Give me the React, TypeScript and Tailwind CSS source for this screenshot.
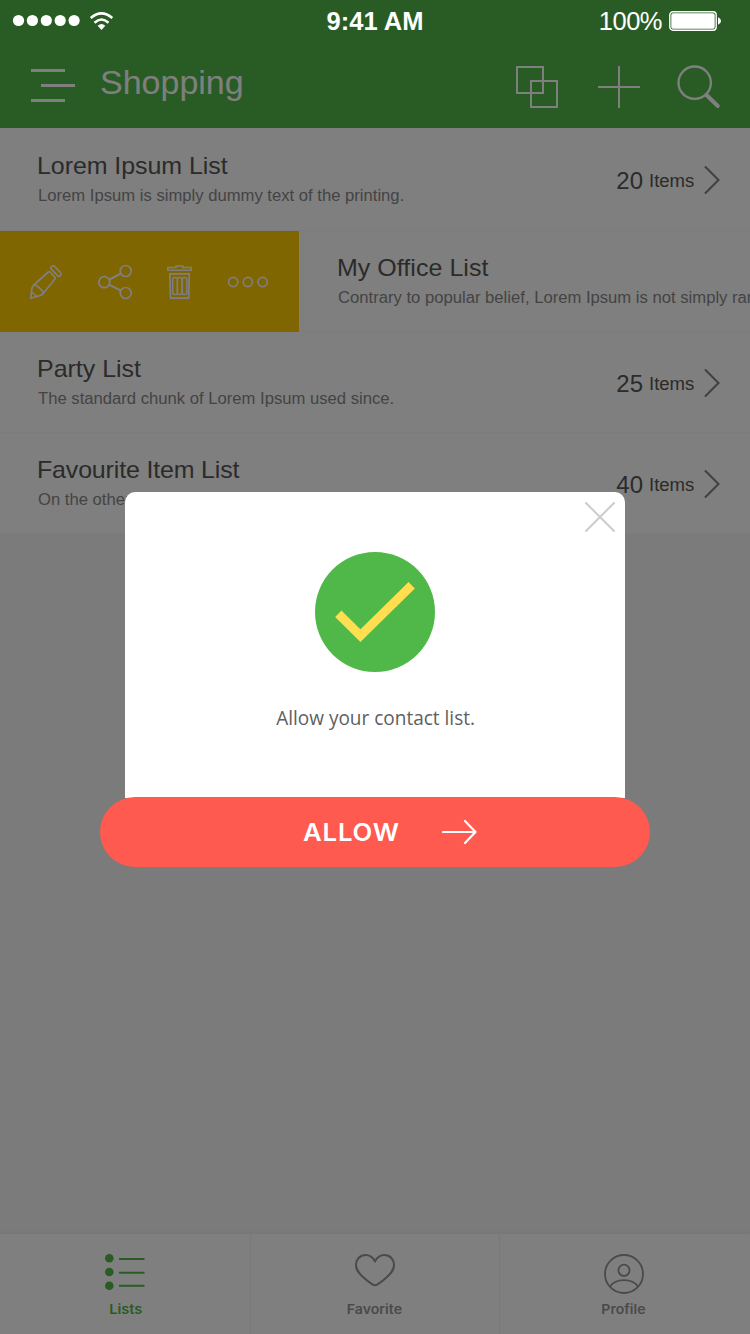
import React from "react";

type ListRow = { title: string; note: string; count: number; tracking: string };

const first: ListRow = {
  title: "Lorem Ipsum List",
  note: "Lorem Ipsum is simply dummy text of the printing.",
  count: 20,
  tracking: "tracking-[-0.05px]",
};
const rest: ListRow[] = [
  { title: "Party List", note: "The standard chunk of Lorem Ipsum used since.", count: 25, tracking: "tracking-normal" },
  { title: "Favourite Item List", note: "On the other hand, we denounce with.", count: 40, tracking: "tracking-[-0.15px]" },
];

function RowText({ title, note, tracking }: { title: string; note: string; tracking: string }) {
  return (
    <div className="origin-left scale-x-[1.04] whitespace-nowrap">
      <div className={"text-[24px] leading-[30px] text-[#565656] " + tracking}>{title}</div>
      <div className="mt-[5px] pl-px text-[16px] leading-5 text-[#888888]">{note}</div>
    </div>
  );
}

function Row({ row, className }: { row: ListRow; className: string }) {
  return (
    <div className={"flex items-start justify-between border-b border-[#f8f8f8] bg-white pl-[36.5px] pr-[30px] " + className}>
      <RowText title={row.title} note={row.note} tracking={row.tracking} />
      <div className="flex h-[59px] items-center text-[#565656]">
        <span className="text-[24px] leading-none">{row.count}</span>
        <span className="ml-[6px] origin-left scale-x-[1.03] text-[18px] leading-none">Items</span>
        <svg className="-mt-px ml-[11px] h-[30px] w-[16px]" viewBox="0 0 16 30" fill="none" stroke="#808080" strokeWidth="2">
          <path d="M1.500 2L14.500 15L1.500 28" strokeLinecap="round" />
        </svg>
      </div>
    </div>
  );
}

function StatusBar() {
  return (
    <div className="absolute inset-x-0 top-0 grid h-10 grid-cols-[1fr_auto_1fr] grid-rows-[40px] items-center text-white">
      <svg className="h-10 w-[120px]" viewBox="0 0 120 40">
        <g fill="#fff">
          <circle cx="18.500" cy="20.500" r="5.600" />
          <circle cx="32.400" cy="20.500" r="5.600" />
          <circle cx="46.300" cy="20.500" r="5.600" />
          <circle cx="60.200" cy="20.500" r="5.600" />
          <circle cx="74.100" cy="20.500" r="5.600" />
          <path d="M101.500 30L97.700 25.800Q101.500 22.200 105.300 25.800Z" />
        </g>
        <g fill="none" stroke="#fff" strokeWidth="2.600">
          <path d="M94.500 22.700Q101.500 16.300 108.500 22.700" />
          <path d="M90.700 18Q101.500 8.800 112.300 18" />
        </g>
      </svg>
      <span className="translate-y-px text-[25.5px] font-bold leading-10">9:41 AM</span>
      <div className="flex items-center justify-end pr-[28px]">
        <span className="translate-y-px text-[25.5px] leading-10 tracking-[-0.5px]">100%</span>
        <svg className="ml-[7px] mt-[2px] h-5 w-[53px]" viewBox="0 0 53 20">
          <rect x="0.800" y="0.800" width="46.400" height="18.400" rx="3.200" fill="none" stroke="#fff" strokeWidth="1.400" />
          <rect x="2.300" y="2.300" width="43.400" height="15.400" rx="1.800" fill="#fff" />
          <path d="M49 6.200Q52 7.500 52 10Q52 12.500 49 13.800Z" fill="#fff" />
        </svg>
      </div>
    </div>
  );
}

function SwipeActions() {
  return (
    <svg className="h-[101px] w-[299px] shrink-0 bg-[#ffcc00]" viewBox="0 231 299 101" fill="none" stroke="#fff" strokeWidth="1.700">
      <g strokeLinejoin="round">
        <path d="M30.800 298.200L31.800 289Q32.200 286.800 33.800 285L48.300 272Q49.300 271.300 50 272L55 277.300Q55.600 278 55 279L44 292.500Q42.500 294.600 40.500 295.400Z" />
        <path d="M34.300 284.600Q40.500 287.500 43.500 293M32 292.700Q35 293.700 36.500 296.600" />
        <path d="M50.700 268.600Q50.200 267.700 52.300 265.900Q53.700 265.500 54.800 266.600L60.500 272.500Q61.700 274 60.900 275.100Q59.300 277 58.200 276.200Z" />
      </g>
      <circle cx="104.300" cy="282.200" r="5.500" />
      <circle cx="125.700" cy="271" r="5.500" />
      <circle cx="125.700" cy="293" r="5.500" />
      <path d="M109.500 279.500L120.700 273.600M109.500 284.900L120.700 290.500" strokeWidth="2" />
      <path d="M167.800 270.200V267.500H176V265.900H182.800V267.500H191.200V270.200Z" strokeWidth="1.500" />
      <path d="M169.800 273.800H189.300L188.700 298.200H170.600Z" />
      <g strokeWidth="1.400">
        <rect x="172.700" y="277.500" width="4.700" height="17" rx="2" />
        <rect x="177.400" y="277.500" width="4.700" height="17" rx="2" />
        <rect x="182.100" y="277.500" width="4.700" height="17" rx="2" />
      </g>
      <circle cx="233.200" cy="282" r="4.600" />
      <circle cx="247.900" cy="282" r="4.600" />
      <circle cx="262.600" cy="282" r="4.600" />
    </svg>
  );
}

export default function App() {
  return (
    <div className="relative flex h-[1334px] w-[750px] flex-col overflow-hidden bg-[#f6f6f6] font-['Liberation_Sans',Arial,sans-serif]">
      <header className="flex h-[128px] shrink-0 items-start bg-[#50b848] pl-[31px] pr-[29px] pt-[63px]">
        <svg className="mt-1.5 h-[33px] w-[44px]" viewBox="0 0 44 33" stroke="#fff" strokeWidth="3">
          <path d="M0 1.500H34M10 16.500H44M0 31.500H34" />
        </svg>
        <h1 className="ml-[25px] origin-left scale-x-[1.03] text-[33px] leading-[40px] text-white">Shopping</h1>
        <svg className="ml-auto mt-[3px] h-[42px] w-[42px]" viewBox="0 0 42 42" fill="none" stroke="#fff" strokeWidth="2">
          <path d="M1 1H27V27H1ZM15 15H41V41H15Z" />
        </svg>
        <svg className="ml-10 mt-[3px] h-[42px] w-[42px]" viewBox="0 0 42 42" stroke="#fff" strokeWidth="2">
          <path d="M21 0V42M0 21H42" />
        </svg>
        <svg className="ml-[37px] mt-[2px] h-[44px] w-[44px]" viewBox="0 0 44 44" fill="none" stroke="#fff">
          <circle cx="17.700" cy="17.700" r="16.200" strokeWidth="2.400" />
          <path d="M29.500 30L40.800 41" strokeWidth="4" strokeLinecap="round" />
        </svg>
      </header>

      <main className="flex-1">
        <Row row={first} className="h-[103px] pt-[23px]" />
        <div className="flex h-[101px] bg-white">
          <SwipeActions />
          <div className="min-w-0 flex-1 overflow-hidden border-b border-[#f8f8f8] pl-[38px] pt-[22px]">
            <RowText
              title="My Office List"
              note="Contrary to popular belief, Lorem Ipsum is not simply random"
              tracking="tracking-[0.05px]"
            />
          </div>
        </div>
        {rest.map((row) => (
          <Row key={row.title} row={row} className="h-[101px] pt-[22px]" />
        ))}
      </main>

      <nav className="grid h-[100px] shrink-0 grid-cols-[251px_249px_250px] bg-white font-['Inter',sans-serif] text-[13px] font-semibold leading-5 text-[#949494] shadow-[0_-1px_5px_rgba(0,0,0,0.06)]">
        <div className="flex flex-col items-center border-r border-[#f0f0f0] pt-5 text-[#50b848]">
          <svg className="h-[40px] w-[40px]" viewBox="0 0 40 40" fill="#50b848">
            <circle cx="4.300" cy="4.300" r="4.300" />
            <circle cx="4.300" cy="18" r="4.300" />
            <circle cx="4.300" cy="31.700" r="4.300" />
            <path d="M14 4h25.500v2H14zM14 17.700h25.500v2H14zM14 30.700h25.500v2H14z" />
          </svg>
          <span className="ml-px mt-[5px] scale-x-[1.12]">Lists</span>
        </div>
        <div className="flex flex-col items-center border-r border-[#f0f0f0] pt-5">
          <svg className="h-[40px] w-[42px]" viewBox="0 0 42 40" fill="none" stroke="#949494" strokeWidth="2">
            <path d="M21 7.200C23.500 2.800 26.500 1 30.300 1C36.300 1 40 5.600 40 11C40 16 37.500 18.700 33.500 22.500C29.500 26.300 26 29 23.200 30.700Q21 32 18.800 30.700C16 29 12.500 26.300 8.500 22.500C4.500 18.700 2 16 2 11C2 5.600 5.700 1 11.700 1C15.500 1 18.500 2.800 21 7.200Z" />
          </svg>
          <span className="mr-px mt-[5px] scale-x-[1.09]">Favorite</span>
        </div>
        <div className="flex flex-col items-center pr-[2px] pt-5">
          <svg className="h-[40px] w-[40px]" viewBox="0 0 40 40" fill="none" stroke="#949494" strokeWidth="1.800">
            <circle cx="20" cy="20" r="19" />
            <circle cx="20" cy="16.300" r="5.600" />
            <path d="M6 32.500Q10.500 26.200 20 26.200Q29.500 26.200 34 32.500" />
          </svg>
          <span className="mr-px mt-[5px] scale-x-[1.08]">Profile</span>
        </div>
      </nav>

      <div className="absolute inset-0 bg-black/50" />
      <StatusBar />

      <div role="dialog" className="absolute left-[100px] top-[492px] flex w-[550px] flex-col items-center">
        <div className="flex h-[306px] w-[500px] flex-col items-center rounded-t-[10px] bg-white">
          <svg className="mr-[10px] mt-[10px] h-[30px] w-[30px] self-end" viewBox="0 0 30 30" stroke="#ccc" strokeWidth="2">
            <path d="M1 1L29 29M29 1L1 29" strokeLinecap="round" />
          </svg>
          <svg className="mt-5 h-[120px] w-[120px]" viewBox="0 0 120 120">
            <circle cx="60" cy="60" r="60" fill="#50b848" />
            <path d="M23.300 61.700L45.400 83.600L96.700 33.200" fill="none" stroke="#ffdf50" strokeWidth="9" />
          </svg>
          <p className="ml-[2px] mt-[32px] scale-x-[0.95] font-['Open_Sans',sans-serif] text-[20px] leading-7 text-[#606060]">
            Allow your contact list.
          </p>
        </div>
        <button className="-mt-px flex h-[70px] w-[550px] items-center rounded-full bg-[#ff5a4f] pl-[203px] text-white">
          <span className="w-[138.5px] origin-left scale-x-[1.05] text-left font-['Inter',sans-serif] text-[24.5px] font-semibold leading-none tracking-[0.8px]">ALLOW</span>
          <svg className="h-[28px] w-[36px]" viewBox="0 0 36 28" fill="none" stroke="#fff" strokeWidth="2.200" strokeLinecap="round" strokeLinejoin="round">
            <path d="M1 14H33.500M23 3L33.500 14L23 25" />
          </svg>
        </button>
      </div>
    </div>
  );
}
